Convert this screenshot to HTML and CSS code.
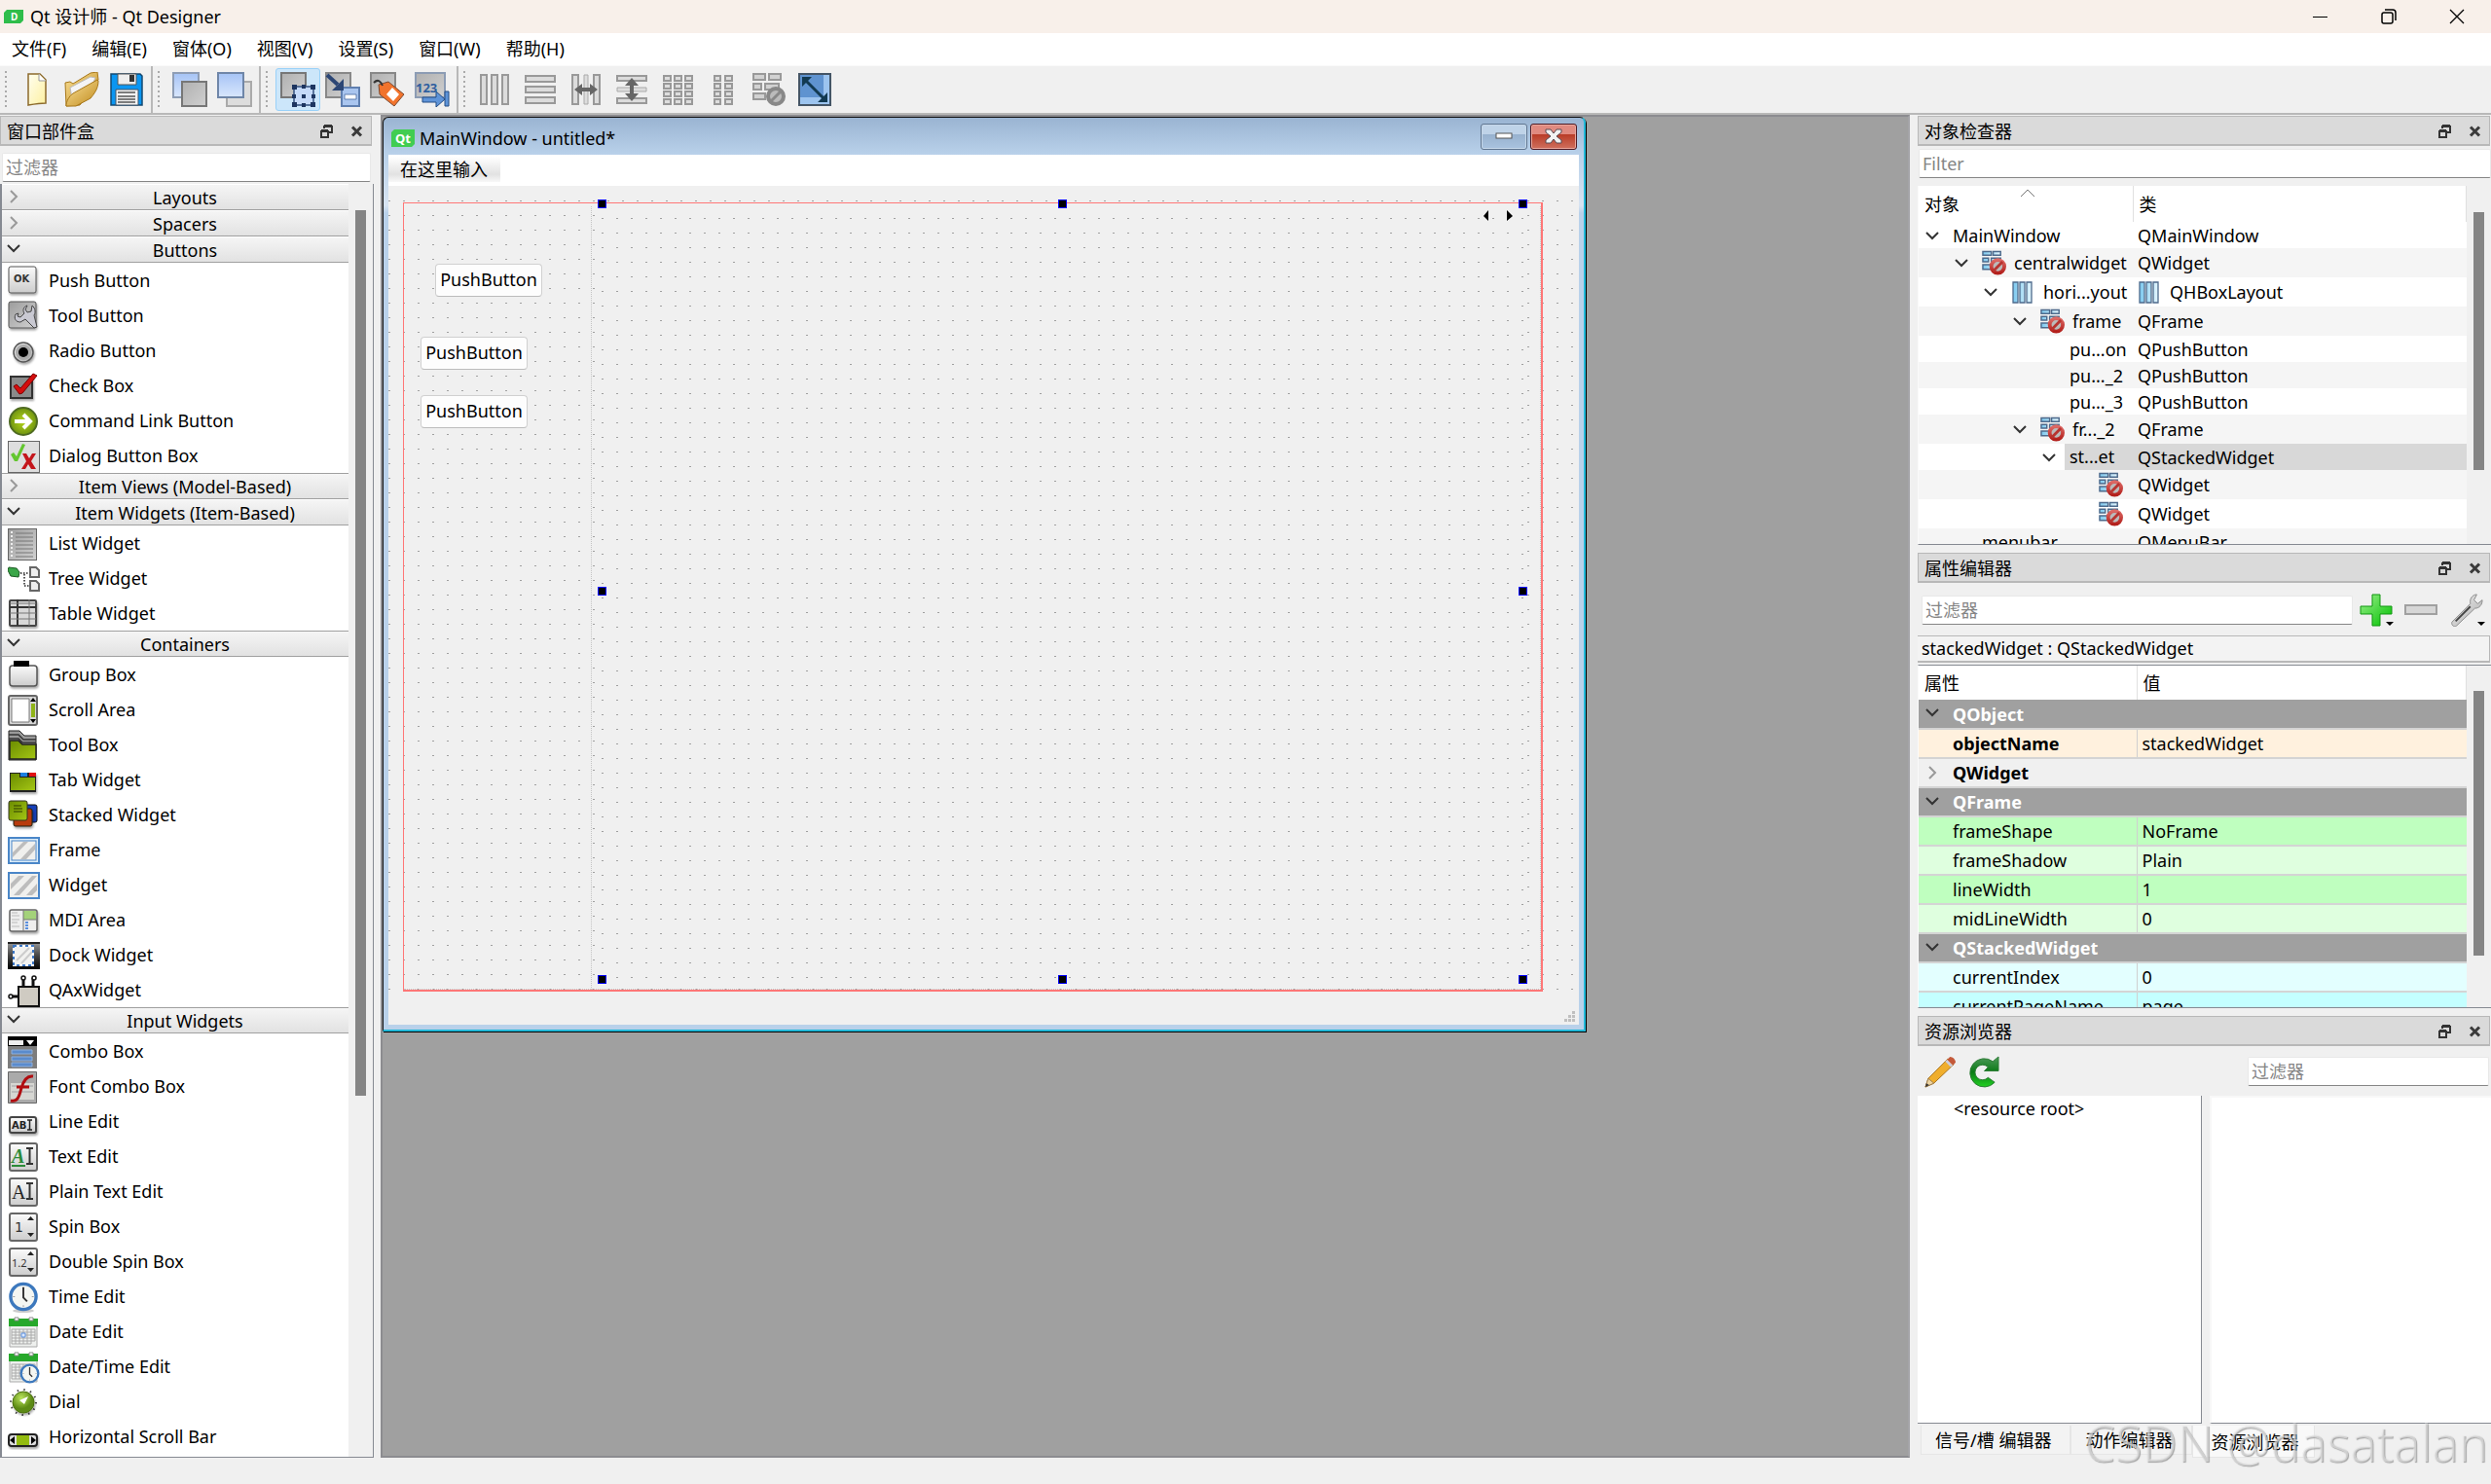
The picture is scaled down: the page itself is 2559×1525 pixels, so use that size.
FILE: index.html
```html
<!DOCTYPE html>
<html lang="zh-CN">
<head>
<meta charset="utf-8">
<title>Qt 设计师 - Qt Designer</title>
<link rel="stylesheet" href="styles.css">
</head>
<body>
<svg class="defs" width="0" height="0" aria-hidden="true">
  <defs>
    <linearGradient id="gGrey" x1="0" y1="0" x2="1" y2="1"><stop offset="0" stop-color="#f4f4f4"/><stop offset="1" stop-color="#a9a9a9"/></linearGradient>
    <linearGradient id="gDark" x1="0" y1="0" x2="1" y2="1"><stop offset="0" stop-color="#9c9c9c"/><stop offset="1" stop-color="#d2d2d2"/></linearGradient>
    <linearGradient id="gMid" x1="0" y1="0" x2="1" y2="1"><stop offset="0" stop-color="#b0b0b0"/><stop offset="1" stop-color="#d0d0d0"/></linearGradient>
    <linearGradient id="gLight" x1="0" y1="0" x2="0" y2="1"><stop offset="0" stop-color="#fbfbfb"/><stop offset="1" stop-color="#cccccc"/></linearGradient>
    <linearGradient id="gGreen" x1="0" y1="0" x2="1" y2="1"><stop offset="0" stop-color="#6b8c00"/><stop offset="1" stop-color="#a4c614"/></linearGradient>
    <linearGradient id="gBlue" x1="0" y1="0" x2="0" y2="1"><stop offset="0" stop-color="#a5c3f5"/><stop offset="1" stop-color="#d9e7fd"/></linearGradient>
    <linearGradient id="gSky" x1="0" y1="0" x2="1" y2="0"><stop offset="0" stop-color="#7cc8ee"/><stop offset="1" stop-color="#e4f6fd"/></linearGradient>
    <linearGradient id="gYellow" x1="0" y1="0" x2="1" y2="1"><stop offset="0" stop-color="#fffef0"/><stop offset="1" stop-color="#fdf0a0"/></linearGradient>
    <linearGradient id="gFolder" x1="0" y1="0" x2="1" y2="1"><stop offset="0" stop-color="#fbe29a"/><stop offset="1" stop-color="#c08a1c"/></linearGradient>
    <linearGradient id="gPlus" x1="0" y1="0" x2="1" y2="1"><stop offset="0" stop-color="#9cf08c"/><stop offset="1" stop-color="#00c000"/></linearGradient>
    <linearGradient id="gReload" x1="0" y1="0" x2="0" y2="1"><stop offset="0" stop-color="#4e9a5a"/><stop offset=".5" stop-color="#0b7a16"/><stop offset="1" stop-color="#22d022"/></linearGradient>
    <linearGradient id="gRed" x1="0" y1="0" x2="0" y2="1"><stop offset="0" stop-color="#dd6a66"/><stop offset="1" stop-color="#b3201c"/></linearGradient>
    <radialGradient id="gBall"><stop offset="0" stop-color="#b8d61c"/><stop offset="1" stop-color="#6f9410"/></radialGradient>
    <radialGradient id="gDial" cx=".4" cy=".3"><stop offset="0" stop-color="#b9e35c"/><stop offset="1" stop-color="#5c8a14"/></radialGradient>
    <linearGradient id="gBlack" x1="0" y1="0" x2="0" y2="1"><stop offset="0" stop-color="#9a9a9a"/><stop offset=".5" stop-color="#444"/><stop offset="1" stop-color="#000"/></linearGradient>
    <filter id="shade" x="-20%" y="-20%" width="150%" height="150%"><feDropShadow dx="1" dy="2" stdDeviation="1" flood-opacity=".35"/></filter>
  </defs>

  <symbol id="down" viewBox="0 0 14 10"><path d="M1 2l6 6 6-6" fill="none" stroke="#333" stroke-width="2"/></symbol>
  <symbol id="right" viewBox="0 0 10 14"><path d="M2 1l6 6-6 6" fill="none" stroke="#999" stroke-width="2"/></symbol>
  <symbol id="float" viewBox="0 0 13 14"><path d="M4 4V2h8v6H9M4 1h8" fill="none" stroke="#333" stroke-width="2"/><path d="M1 7h7v6H1zM1 6h7" fill="none" stroke="#333" stroke-width="2"/></symbol>
  <symbol id="cross" viewBox="0 0 13 13"><path d="M2 2l9 9M11 2l-9 9" stroke="#3a3a3a" stroke-width="3"/></symbol>

  <symbol id="w-push" viewBox="0 0 33 36"><rect x="1" y="4" width="28" height="27" rx="2" fill="url(#gLight)" stroke="#555" filter="url(#shade)"/><text x="6" y="20" font-size="10" font-weight="700" fill="#333" font-family="DejaVu Sans">OK</text></symbol>
  <symbol id="w-tool" viewBox="0 0 33 36"><rect x="1" y="4" width="28" height="27" rx="2" fill="url(#gDark)" stroke="#555" filter="url(#shade)"/><path d="M20 8c-4 1-5 5-3 8l-4 4-3-1 1-3-3 1c-2 4 0 8 5 8l5-3 9 9 3-1-3-12c2-3 1-8-2-10l-1 6-4 1-2-3z" fill="#c9c9d2" stroke="#444"/></symbol>
  <symbol id="w-radio" viewBox="0 0 33 36"><circle cx="16" cy="20" r="10" fill="url(#gGrey)" stroke="#555" stroke-width="1.500" filter="url(#shade)"/><circle cx="16" cy="20" r="8" fill="#aaa"/><circle cx="16" cy="20" r="5" fill="#000"/></symbol>
  <symbol id="w-check" viewBox="0 0 33 36"><rect x="3" y="9" width="22" height="22" fill="#8a8a8a" stroke="#333" stroke-width="2" filter="url(#shade)"/><path d="M6 19l3-2 4 4L26 6l4 2-15 18-3 1z" fill="#d40d0d" stroke="#7e0000"/></symbol>
  <symbol id="w-link" viewBox="0 0 33 36"><circle cx="16" cy="19" r="14" fill="url(#gBall)" stroke="#4f6b22" stroke-width="2"/><path d="M7 19h15M16 12l7 7-7 7" fill="none" stroke="#fff" stroke-width="4"/></symbol>
  <symbol id="w-dialog" viewBox="0 0 33 36"><rect x=".5" y="3.500" width="32" height="32" fill="#dedede" stroke="#666"/><path d="M3 17l3-2 3 4 6-13 3 1-8 17-3 0z" fill="#63c62f"/><path d="M15 16h4l3 5 3-5h4l-5 8 5 8h-5l-3-5-3 5h-4l5-8z" fill="#c4161c"/></symbol>
  <symbol id="w-list" viewBox="0 0 33 36"><rect x=".5" y="3.500" width="29" height="32" fill="url(#gDark)" stroke="#666"/><path d="M8 8h18M8 12h18M8 16h18M8 20h18M8 24h18M8 28h18M8 32h18" stroke="#777"/><path d="M4 6v28" stroke="#eee" stroke-width="2" stroke-dasharray="2 2"/></symbol>
  <symbol id="w-tree" viewBox="0 0 33 36"><path d="M1 7l8 1 3 4-1 5-8-1-3-6z" fill="#3aa648" stroke="#1a5a22"/><path d="M13 13h9M17 14v12h5" fill="none" stroke="#222" stroke-width="1.500" stroke-dasharray="1.500 1.500"/><path d="M23 7h6l3 3v7h-9zM23 21h6l3 3v7h-9z" fill="#eee" stroke="#666" stroke-width="2"/></symbol>
  <symbol id="w-table" viewBox="0 0 33 36"><rect x="2" y="5" width="27" height="26" rx="1" fill="#d8d8d8" stroke="#444" stroke-width="2" filter="url(#shade)"/><path d="M10 4v27M2 12h27" stroke="#333" stroke-width="2"/><path d="M22 4v27M2 18h27M2 24h27M2 8h27" stroke="#777"/></symbol>
  <symbol id="w-group" viewBox="0 0 33 36"><rect x="2" y="9" width="28" height="21" rx="3" fill="url(#gLight)" stroke="#555" stroke-width="1.500" filter="url(#shade)"/><rect x="6" y="4" width="16" height="6" fill="#000"/></symbol>
  <symbol id="w-scroll" viewBox="0 0 33 36"><rect x="1" y="4" width="29" height="30" rx="2" fill="#d6d6d6" stroke="#666" stroke-width="2"/><path d="M4 7h18v24H4z" fill="#fff" stroke="#777"/><path d="M24 12h4v14h-4z" fill="#8fb318"/><path d="M23 10h6l-3-4zM23 28h6l-3 4z"/></symbol>
  <symbol id="w-toolbox" viewBox="0 0 33 36"><path d="M1 4h11l5 5h12v25H1z" fill="#9a9a9a" stroke="#222"/><path d="M1 8h10l5 5h13M1 12h10l4 4h14" fill="none" stroke="#333" stroke-width="1.500"/><path d="M2 14h9l4 4h14v15H2z" fill="url(#gGreen)" stroke="#222" stroke-width="1.500"/></symbol>
  <symbol id="w-tab" viewBox="0 0 33 36"><path d="M2 11h27v20H2z" fill="#222" filter="url(#shade)"/><path d="M3 12h9v4h16v13H3z" fill="url(#gGreen)"/><path d="M13 11h7v4h-7z" fill="#1c7fe0"/><path d="M22 11h7v4h-7z" fill="#e01010"/></symbol>
  <symbol id="w-stack" viewBox="0 0 33 36"><rect x="14" y="8" width="16" height="18" rx="2" fill="#1740b8" stroke="#111"/><rect x="6" y="12" width="19" height="18" rx="2" fill="#b83a0c" stroke="#221" filter="url(#shade)"/><rect x="1" y="4" width="19" height="20" rx="2" fill="url(#gGreen)" stroke="#332"/><path d="M6 9h8M6 12h9M6 15h9" stroke="#2c3a00"/></symbol>
  <symbol id="w-frame" viewBox="0 0 33 36"><rect x="1" y="6" width="31" height="26" fill="#dcecf8" stroke="#4a86c8" stroke-width="2"/><rect x="4" y="9" width="25" height="20" fill="#f0f0ee" stroke="#4a86c8"/><path d="M5 21L16 10h5L5 26zM13 28L28 12v6L19 28z" fill="#bdbdbd"/></symbol>
  <symbol id="w-widget" viewBox="0 0 33 36"><rect x="1" y="6" width="31" height="26" fill="#f0f0ee" stroke="#4a86c8" stroke-width="2"/><path d="M3 17L11 9h6L3 23zM6 29L25 9h5L12 29zM19 29L30 17v7l-5 5z" fill="#bdbdbd"/></symbol>
  <symbol id="w-mdi" viewBox="0 0 33 36"><rect x="2" y="8" width="28" height="22" rx="2" fill="#eee" stroke="#666" stroke-width="1.500" filter="url(#shade)"/><path d="M16 9h13v9H16z" fill="#a4d27a"/><path d="M16 8v22M16 18h14" stroke="#777"/><path d="M4 11h6M4 14h8M4 18h8M4 21h6M4 25h8" stroke="#bbb"/><path d="M18 21h3M18 24h3M18 27h3" stroke="#5a8fdd" stroke-width="2"/></symbol>
  <symbol id="w-dock" viewBox="0 0 33 36"><path d="M0 5h33v28H0z" fill="url(#gBlack)"/><path d="M0 6h33" stroke="#222" stroke-width="2"/><rect x="6" y="9" width="20" height="20" fill="#f2f2f0" stroke="#fff" stroke-width="2"/><path d="M9 24L22 11M14 27L25 15" stroke="#ccc" stroke-width="2"/><rect x="6" y="9" width="20" height="20" fill="none" stroke="#3b76c4" stroke-width="2" stroke-dasharray="3 3"/></symbol>
  <symbol id="w-qax" viewBox="0 0 33 36"><path d="M16 6v9M26 6v9M2 25h9" stroke="#111" stroke-width="3"/><rect x="11" y="15" width="21" height="20" fill="#cfcbc2" stroke="#111" stroke-width="2"/><circle cx="16" cy="6" r="2" fill="#fff" stroke="#111" stroke-width="1.500"/><circle cx="27" cy="6" r="2" fill="#fff" stroke="#111" stroke-width="1.500"/><circle cx="3" cy="25" r="2" fill="#fff" stroke="#111" stroke-width="1.500"/></symbol>
  <symbol id="w-combo" viewBox="0 0 33 36"><path d="M0 3h30v33H0z" fill="#7d7d7d"/><path d="M0 3h30v10H0z"/><path d="M1 7h15v5H1z" fill="#eee"/><path d="M19 7h8l-4 5z" fill="#fff"/><path d="M4 17h21v4H4zM4 24h21v4H4zM4 30h21v4H4z" fill="#5a8bcd" stroke="#8fb0dc"/></symbol>
  <symbol id="w-font" viewBox="0 0 33 36"><path d="M.5 3.500h29v32H.5z" fill="#aaa" stroke="#666"/><path d="M3 15h24v17H3z" fill="#d6d6d2"/><path d="M4 18h22M4 24h22" stroke="#bbb" stroke-width="2"/><path d="M3 33c8 2 9-6 11-13s5-13 12-12M9 19h13" fill="none" stroke="#b00d10" stroke-width="3"/></symbol>
  <symbol id="w-line" viewBox="0 0 33 36"><rect x="2" y="14" width="27" height="16" rx="2" fill="url(#gLight)" stroke="#444" stroke-width="2" filter="url(#shade)"/><text x="4" y="26" font-size="10" font-weight="700" font-family="DejaVu Sans" fill="#222">AB</text><path d="M20 17h5M20 27h5M22.500 17v10" stroke="#222" stroke-width="1.500"/></symbol>
  <symbol id="w-text" viewBox="0 0 33 36"><rect x="2" y="5" width="28" height="28" rx="2" fill="url(#gLight)" stroke="#666" stroke-width="2"/><text x="4" y="25" font-size="20" font-style="italic" font-weight="700" font-family="Liberation Serif" fill="#2b8a38">A</text><path d="M4 28h14" stroke="#2b8a38" stroke-width="2"/><path d="M19 10h7M19 26h7M22.500 10v16" stroke="#333" stroke-width="2"/></symbol>
  <symbol id="w-plain" viewBox="0 0 33 36"><rect x="2" y="5" width="28" height="28" rx="2" fill="url(#gLight)" stroke="#666" stroke-width="2"/><text x="4" y="26" font-size="20" font-family="Liberation Serif" fill="#222">A</text><path d="M19 10h7M19 26h7M22.500 10v16" stroke="#333" stroke-width="2"/></symbol>
  <symbol id="w-spin" viewBox="0 0 33 36"><rect x="2" y="5" width="28" height="28" rx="2" fill="url(#gLight)" stroke="#666" stroke-width="2"/><text x="7" y="24" font-size="14" font-family="DejaVu Sans" fill="#333">1</text><path d="M20 12h7l-3.500-4zM20 25h7l-3.500 4z" fill="#222"/></symbol>
  <symbol id="w-double" viewBox="0 0 33 36"><rect x="2" y="5" width="28" height="28" rx="2" fill="url(#gLight)" stroke="#666" stroke-width="2"/><text x="4" y="24" font-size="11" font-family="Noto Sans" fill="#333">1.2</text><path d="M20 12h7l-3.500-4zM20 25h7l-3.500 4z" fill="#222"/></symbol>
  <symbol id="clock" viewBox="0 0 32 32"><circle cx="16" cy="16" r="13.500" fill="#f4f6f2" stroke="#3c78bd" stroke-width="3.500"/><path d="M16 6v11l4 4" fill="none" stroke="#333" stroke-width="2"/><path d="M16 25v2M5 16h2M25 16h2" stroke="#999"/></symbol>
  <symbol id="w-time" viewBox="0 0 33 36"><ellipse cx="16" cy="33" rx="11" ry="2" fill="#ccc"/><use href="#clock" x="0" y="3" width="32" height="31"/></symbol>
  <symbol id="w-date" viewBox="0 0 33 36"><path d="M2 8h28v26H2z" fill="#eef0ee" stroke="#aaa"/><path d="M1 5h30v8H1z" fill="#27a82b"/><path d="M4 16h24M4 19h24M4 22h24M4 25h24M4 28h24M4 31h20M4 16v15M8 16v15M12 16v15M16 16v15M20 16v15M24 16v15M28 16v12" stroke="#aaa"/><path d="M14 20h4v4h-4z" fill="#dbe9ff" stroke="#5a8fdd"/><path d="M7 4h4v3H7zM22 4h4v3h-4z" fill="#fff" stroke="#888"/></symbol>
  <symbol id="w-datetime" viewBox="0 0 33 36"><use href="#w-date" width="33" height="36"/><use href="#clock" x="12" y="15" width="21" height="21"/></symbol>
  <symbol id="w-dial" viewBox="0 0 33 36"><circle cx="16" cy="19" r="13" fill="none" stroke="#444" stroke-width="2" stroke-dasharray="1.500 5.300"/><circle cx="16" cy="19" r="11" fill="url(#gDial)" stroke="#4b7010" filter="url(#shade)"/><path d="M12 17l9-4-4 8z" fill="#fff"/></symbol>
  <symbol id="w-hscroll" viewBox="0 0 33 36"><rect x="1" y="16" width="29" height="12" rx="3" fill="#ddd" stroke="#222" stroke-width="2" filter="url(#shade)"/><path d="M9 17h13v10H9z" fill="#93bb10"/><path d="M7 18v8l-5-4zM24 18v8l5-4z"/></symbol>

  <symbol id="t-new" viewBox="0 0 36 36"><path d="M9 2h12l6 6v24c-6 0-12 1-18 2z" fill="url(#gYellow)" stroke="#8c6a2c" stroke-width="1.500"/><path d="M20 2v7h7" fill="#fff" stroke="#999"/></symbol>
  <symbol id="t-open" viewBox="0 0 36 36"><path d="M1 11l5-1 3 2L27 1l7-1 1 8L16 34l-14 1z" fill="url(#gFolder)" stroke="#a8781a"/><path d="M6 16L27 5l5 1-6 13-18 8z" fill="#f4f4f6" stroke="#bbb"/><path d="M9 22l25-14 1 1c0 8-4 13-8 18L12 35H2c0-5 3-10 7-13z" fill="url(#gFolder)" stroke="#a8781a"/></symbol>
  <symbol id="t-save" viewBox="0 0 36 36"><path d="M2 2h30l2 2v30H2z" fill="#0b96f2" stroke="#154a72" stroke-width="1.500"/><path d="M9 2h19v11H9z" fill="#eee" stroke="#555"/><path d="M21 3h5v7h-5z" fill="#333"/><path d="M7 18h23v16H7z" fill="#f2f2f2" stroke="#456"/><path d="M9 21h18M9 25h18M9 28h18M9 31h18" stroke="#555" stroke-width="1.500"/></symbol>
  <symbol id="t-back" viewBox="0 0 36 36"><path d="M1 1h26v25H1z" fill="url(#gBlue)" stroke="#8e9db5" stroke-width="2"/><path d="M10 10h25v25H10z" fill="url(#gMid)" stroke="#777" stroke-width="2"/></symbol>
  <symbol id="t-front" viewBox="0 0 36 36"><path d="M10 10h25v25H10z" fill="#ddd" stroke="#aaa" stroke-width="2"/><path d="M1 1h26v25H1z" fill="url(#gBlue)" stroke="#6f86a8" stroke-width="2"/></symbol>
  <symbol id="t-widgets" viewBox="0 0 36 36"><path d="M1 1h25v25H1z" fill="url(#gMid)" stroke="#777" stroke-width="2"/><path d="M14 15h20v19H14z" fill="#c5daf9" stroke="#33507e" stroke-width="1.500"/><path d="M12 13h5v5h-5zM22 13h4v4h-4zM31 13h5v5h-5zM12 23h4v4h-4zM32 23h4v4h-4zM12 31h5v5h-5zM22 32h4v4h-4zM31 31h5v5h-5zM22 23h4v4h-4z" fill="#1d3560"/></symbol>
  <symbol id="t-signals" viewBox="0 0 36 36"><path d="M1 1h25v25H1z" fill="url(#gMid)" stroke="#888" stroke-width="2"/><path d="M17 16h18v19H17z" fill="#a9c5ef" stroke="#5f7fb0" stroke-width="2"/><path d="M20 23h12v5H20z" fill="#fff" stroke="#5f7fb0"/><path d="M2 3l11 10" stroke="#2c4675" stroke-width="4"/><path d="M19 7v12H7z" fill="#2c4675"/></symbol>
  <symbol id="t-buddies" viewBox="0 0 36 36"><path d="M1 1h25v25H1z" fill="url(#gMid)" stroke="#888" stroke-width="2"/><path d="M9 13l10-3 16 13-10 12L10 23z" fill="#f1732c" stroke="#7b4a32"/><path d="M23 16l7 7-6 7-7-7z" fill="#fff"/><path d="M4 11c4-4 7-2 9 3" fill="none" stroke="#333" stroke-width="2"/></symbol>
  <symbol id="t-taborder" viewBox="0 0 36 36"><path d="M1 1h30v25H1z" fill="url(#gMid)" stroke="#8c9cb4" stroke-width="2"/><text x="1" y="21" font-size="13" font-weight="700" font-family="Noto Sans" fill="#2f5f9f">123</text><path d="M8 26h14v-6l9 8-9 8v-5H8zM31 20h4v15h-4z" fill="#5f94d8" stroke="#234c85"/></symbol>
  <symbol id="t-h" viewBox="0 0 36 36"><path d="M4 3h6v30H4zM15 3h6v30h-6zM26 3h6v30h-6z" fill="#dcdcdc" stroke="#999" stroke-width="2"/></symbol>
  <symbol id="t-v" viewBox="0 0 36 36"><path d="M3 4h30v6H3zM3 15h30v6H3zM3 26h30v6H3z" fill="#dcdcdc" stroke="#999" stroke-width="2"/></symbol>
  <symbol id="t-hs" viewBox="0 0 36 36"><path d="M4 3h6v30H4zM26 3h6v30h-6z" fill="#dcdcdc" stroke="#999" stroke-width="2"/><path d="M16 3h4v30h-4z" fill="#ddd" stroke="#aaa"/><path d="M6 18l8-6v4h8v-4l8 6-8 6v-4h-8v4z" fill="#666"/></symbol>
  <symbol id="t-vs" viewBox="0 0 36 36"><path d="M3 4h30v5H3zM3 27h30v5H3z" fill="#dcdcdc" stroke="#999" stroke-width="2"/><path d="M3 16h30v4H3z" fill="#ddd" stroke="#aaa"/><path d="M18 6l7 8h-5v8h5l-7 8-7-8h5v-8h-5z" fill="#666"/></symbol>
  <symbol id="t-grid" viewBox="0 0 36 36"><path d="M4 4h7v5H4zM15 4h7v5h-7zM26 4h7v5h-7zM4 12h7v5H4zM15 12h7v5h-7zM26 12h7v5h-7zM4 20h7v5H4zM15 20h7v5h-7zM26 20h7v5h-7zM4 28h7v5H4zM15 28h7v5h-7zM26 28h7v5h-7z" fill="#ddd" stroke="#999" stroke-width="2"/></symbol>
  <symbol id="t-form" viewBox="0 0 36 36"><path d="M9 4h6v5H9zM20 4h7v5h-7zM9 12h6v5H9zM20 12h7v5h-7zM9 20h6v5H9zM20 20h7v5h-7zM9 28h6v5H9zM20 28h7v5h-7z" fill="#ddd" stroke="#999" stroke-width="2"/></symbol>
  <symbol id="t-break" viewBox="0 0 36 36"><path d="M2 2h12v6H2zM18 2h12v6H18zM2 12h8v6H2zM14 12h14v6H14zM2 22h12v6H2z" fill="#d2d2d2" stroke="#999" stroke-width="2"/><circle cx="25" cy="25" r="8" fill="#bbb" stroke="#888" stroke-width="4"/><path d="M20 30l10-10" stroke="#888" stroke-width="3"/></symbol>
  <symbol id="t-adjust" viewBox="0 0 36 36"><path d="M2 2h32v32H2z" fill="#5f93d0" stroke="#456" stroke-width="2"/><path d="M3 26h24V3h6v30H3z" fill="#9cc4ef"/><path d="M8 8l21 21" stroke="#123a52" stroke-width="3"/><path d="M5 5h10L5 15zM31 31H21l10-10z" fill="#123a52"/></symbol>

  <symbol id="nolayout" viewBox="0 0 26 26"><path d="M1 1h9v4H1zM12 1h8v4h-8zM1 8h6v4H1zM10 8h10v4H10zM1 15h9v5H1z" fill="url(#gSky)" stroke="#4d6a8c" stroke-width="1.500"/><circle cx="17" cy="17" r="7" fill="#bbb" stroke="url(#gRed)" stroke-width="4"/><path d="M12 22l10-10" stroke="#b83430" stroke-width="3"/></symbol>
  <symbol id="hbox" viewBox="0 0 25 26"><path d="M2 3h5v21H2zM9 3h5v21H9zM16 3h5v21h-5z" fill="url(#gSky)" stroke="#4d6a8c" stroke-width="1.300"/></symbol>
  <symbol id="plus" viewBox="0 0 34 34"><path d="M13 1h8v12h12v8H21v12h-8V21H1v-8h12z" fill="url(#gPlus)" stroke="#119611"/></symbol>
  <symbol id="minus" viewBox="0 0 34 34"><path d="M1 12h32v9H1z" fill="#d6d6d6" stroke="#a0a0a0" stroke-width="2"/></symbol>
  <symbol id="wrench" viewBox="0 0 36 36"><path d="M2 31L22 11c-1-5 2-10 7-10l-3 6 4 4 5-4c0 5-3 9-8 9L7 35c-3 2-6-1-5-4z" fill="url(#gGrey)" stroke="#888"/><path d="M6 30l16-16" stroke="#444" stroke-width="2"/></symbol>
  <symbol id="pencil" viewBox="0 0 34 34"><path d="M1 33l3-9L25 3l6 6L10 29z" fill="#f0ae2c" stroke="#a87420"/><path d="M1 33l3-9 6 5z" fill="#ecd3a0" stroke="#a08050"/><path d="M1 33l1-4 3 2z" fill="#333"/><path d="M24 4l3-3c3 0 6 3 6 6l-3 3z" fill="#c4593a"/><path d="M22 6l6 6 2-2-6-6z" fill="#ccd"/></symbol>
  <symbol id="reload" viewBox="0 0 34 34"><path d="M22 12a8 8 0 1 0 0 11l7 5A15 15 0 1 1 27 6l6-5v15H18z" fill="url(#gReload)" stroke="#2b7a34"/></symbol>
</svg>

<div class="app">
  <header class="titlebar">
    <svg class="logo" viewBox="0 0 20 14"><path d="M3 0h17v11l-3 3H0V3z" fill="#2fbd4b"/><text x="7" y="11" font-size="10" font-weight="700" font-family="Noto Sans" fill="#fff">D</text></svg>
    <h1>Qt 设计师 - Qt Designer</h1>
    <div class="caption-buttons">
      <button aria-label="最小化"><svg width="16" height="16"><path d="M0 8.500h15" stroke="#000"/></svg></button>
      <button aria-label="还原"><svg width="16" height="16" fill="none" stroke="#000" stroke-width="1.500"><rect x="1" y="4" width="11" height="11" rx="2"/><path d="M4 1h8a3 3 0 0 1 3 3v8"/></svg></button>
      <button aria-label="关闭"><svg width="16" height="16"><path d="M1 1l14 14M15 1L1 15" stroke="#000" stroke-width="1.300"/></svg></button>
    </div>
  </header>

  <nav class="menubar">
    <button>文件(F)</button><button>编辑(E)</button><button>窗体(O)</button><button>视图(V)</button><button>设置(S)</button><button>窗口(W)</button><button>帮助(H)</button>
  </nav>

  <div class="toolbars">
    <div class="toolbar">
      <button aria-label="新建"><svg><use href="#t-new"/></svg></button>
      <button aria-label="打开"><svg><use href="#t-open"/></svg></button>
      <button aria-label="保存"><svg><use href="#t-save"/></svg></button>
    </div>
    <div class="toolbar">
      <button aria-label="放到后面"><svg><use href="#t-back"/></svg></button>
      <button aria-label="放到前面"><svg><use href="#t-front"/></svg></button>
    </div>
    <div class="toolbar">
      <button class="on" aria-label="编辑控件"><svg><use href="#t-widgets"/></svg></button>
      <button aria-label="编辑信号/槽"><svg><use href="#t-signals"/></svg></button>
      <button aria-label="编辑伙伴"><svg><use href="#t-buddies"/></svg></button>
      <button aria-label="编辑 Tab 顺序"><svg><use href="#t-taborder"/></svg></button>
    </div>
    <div class="toolbar last">
      <button aria-label="水平布局"><svg><use href="#t-h"/></svg></button>
      <button aria-label="垂直布局"><svg><use href="#t-v"/></svg></button>
      <button aria-label="水平分裂器"><svg><use href="#t-hs"/></svg></button>
      <button aria-label="垂直分裂器"><svg><use href="#t-vs"/></svg></button>
      <button aria-label="栅格布局"><svg><use href="#t-grid"/></svg></button>
      <button aria-label="表单布局"><svg><use href="#t-form"/></svg></button>
      <button aria-label="打破布局"><svg><use href="#t-break"/></svg></button>
      <button aria-label="调整大小"><svg><use href="#t-adjust"/></svg></button>
    </div>
  </div>

  <main class="workspace">
    <section class="dock box">
      <div class="dock-title"><h2>窗口部件盒</h2><button aria-label="浮动"><svg><use href="#float"/></svg></button><button aria-label="关闭"><svg><use href="#cross"/></svg></button></div>
      <input class="filter" type="text" placeholder="过滤器" aria-label="过滤器">
      <div class="widget-list">
        <div class="widgets">
          <button class="cat"><svg class="closed"><use href="#right"/></svg>Layouts</button>
          <button class="cat"><svg class="closed"><use href="#right"/></svg>Spacers</button>
          <button class="cat"><svg><use href="#down"/></svg>Buttons</button>
          <ul>
            <li><svg><use href="#w-push"/></svg>Push Button</li>
            <li><svg><use href="#w-tool"/></svg>Tool Button</li>
            <li><svg><use href="#w-radio"/></svg>Radio Button</li>
            <li><svg><use href="#w-check"/></svg>Check Box</li>
            <li><svg><use href="#w-link"/></svg>Command Link Button</li>
            <li><svg><use href="#w-dialog"/></svg>Dialog Button Box</li>
          </ul>
          <button class="cat after"><svg class="closed"><use href="#right"/></svg>Item Views (Model-Based)</button>
          <button class="cat"><svg><use href="#down"/></svg>Item Widgets (Item-Based)</button>
          <ul>
            <li><svg><use href="#w-list"/></svg>List Widget</li>
            <li><svg><use href="#w-tree"/></svg>Tree Widget</li>
            <li><svg><use href="#w-table"/></svg>Table Widget</li>
          </ul>
          <button class="cat after"><svg><use href="#down"/></svg>Containers</button>
          <ul>
            <li><svg><use href="#w-group"/></svg>Group Box</li>
            <li><svg><use href="#w-scroll"/></svg>Scroll Area</li>
            <li><svg><use href="#w-toolbox"/></svg>Tool Box</li>
            <li><svg><use href="#w-tab"/></svg>Tab Widget</li>
            <li><svg><use href="#w-stack"/></svg>Stacked Widget</li>
            <li><svg><use href="#w-frame"/></svg>Frame</li>
            <li><svg><use href="#w-widget"/></svg>Widget</li>
            <li><svg><use href="#w-mdi"/></svg>MDI Area</li>
            <li><svg><use href="#w-dock"/></svg>Dock Widget</li>
            <li><svg><use href="#w-qax"/></svg>QAxWidget</li>
          </ul>
          <button class="cat after"><svg><use href="#down"/></svg>Input Widgets</button>
          <ul>
            <li><svg><use href="#w-combo"/></svg>Combo Box</li>
            <li><svg><use href="#w-font"/></svg>Font Combo Box</li>
            <li><svg><use href="#w-line"/></svg>Line Edit</li>
            <li><svg><use href="#w-text"/></svg>Text Edit</li>
            <li><svg><use href="#w-plain"/></svg>Plain Text Edit</li>
            <li><svg><use href="#w-spin"/></svg>Spin Box</li>
            <li><svg><use href="#w-double"/></svg>Double Spin Box</li>
            <li><svg><use href="#w-time"/></svg>Time Edit</li>
            <li><svg><use href="#w-date"/></svg>Date Edit</li>
            <li><svg><use href="#w-datetime"/></svg>Date/Time Edit</li>
            <li><svg><use href="#w-dial"/></svg>Dial</li>
            <li><svg><use href="#w-hscroll"/></svg>Horizontal Scroll Bar</li>
          </ul>
        </div>
        <div class="scrollbar"><span class="thumb t-box"></span></div>
      </div>
    </section>

    <section class="mdi">
      <article class="window">
        <header class="win-title">
          <svg class="qt" viewBox="0 0 24 18"><path d="M3 0h21v15l-3 3H0V3z" fill="#41cd52"/><text x="4" y="14" font-size="13" font-weight="700" font-family="Noto Sans" fill="#fff">Qt</text></svg>
          <h2>MainWindow - untitled*</h2>
          <button class="win-min" aria-label="最小化"><svg width="18" height="8"><rect x="1" y="1" width="16" height="5" fill="#fff" stroke="#555"/></svg></button>
          <button class="win-close" aria-label="关闭"><svg width="20" height="18"><path d="M2 2h5l3 4 3-4h5v3l-5 4 5 4v3h-5l-3-4-3 4H2v-3l5-4-5-4z" fill="#f2f2f2" stroke="#5a4a52"/></svg></button>
        </header>
        <div class="form">
          <div class="form-menu"><button>在这里输入</button></div>
          <div class="canvas">
            <div class="central"></div>
            <div class="frame-left"></div>
            <div class="frame-right"></div>
            <button class="pb pb1">PushButton</button>
            <button class="pb pb2">PushButton</button>
            <button class="pb pb3">PushButton</button>
            <div class="stacked">
              <div class="page"></div>
              <button class="page-prev" aria-label="上一页"><svg width="6" height="12"><path d="M5 0v11L0 6z"/></svg></button>
              <button class="page-next" aria-label="下一页"><svg width="6" height="12"><path d="M0 0v11l6-5z"/></svg></button>
              <i class="h nw"></i><i class="h n"></i><i class="h ne"></i><i class="h w"></i><i class="h e"></i><i class="h sw"></i><i class="h s"></i><i class="h se"></i>
            </div>
          </div>
          <div class="form-status"><svg width="12" height="12" fill="#bfbfbf"><path d="M8 0h3v3H8zM4 4h3v3H4zM8 4h3v3H8zM0 8h3v3H0zM4 8h3v3H4zM8 8h3v3H8z"/></svg></div>
        </div>
      </article>
    </section>

    <div class="side">
      <section class="dock inspector">
        <div class="dock-title"><h2>对象检查器</h2><button aria-label="浮动"><svg><use href="#float"/></svg></button><button aria-label="关闭"><svg><use href="#cross"/></svg></button></div>
        <input class="filter" type="text" placeholder="Filter" aria-label="Filter">
        <div class="tree">
          <table class="objects">
            <colgroup><col class="c-name"><col></colgroup>
            <thead><tr><th class="sorted">对象<svg width="16" height="8"><path d="M1 8l7-7 7 7" fill="none" stroke="#777"/></svg></th><th>类</th></tr></thead>
            <tbody>
              <tr><td><div class="n l0"><svg class="chev"><use href="#down"/></svg>MainWindow</div></td><td>QMainWindow</td></tr>
              <tr class="tall"><td><div class="n l1"><svg class="chev"><use href="#down"/></svg><svg class="ico"><use href="#nolayout"/></svg>centralwidget</div></td><td>QWidget</td></tr>
              <tr class="tall"><td><div class="n l2"><svg class="chev"><use href="#down"/></svg><svg class="ico"><use href="#hbox"/></svg>hori...yout</div></td><td><div class="n"><svg class="ico"><use href="#hbox"/></svg>QHBoxLayout</div></td></tr>
              <tr class="tall"><td><div class="n l3"><svg class="chev"><use href="#down"/></svg><svg class="ico"><use href="#nolayout"/></svg>frame</div></td><td>QFrame</td></tr>
              <tr><td><div class="n l4 leaf">pu...on</div></td><td>QPushButton</td></tr>
              <tr><td><div class="n l4 leaf">pu..._2</div></td><td>QPushButton</td></tr>
              <tr><td><div class="n l4 leaf">pu..._3</div></td><td>QPushButton</td></tr>
              <tr class="tall"><td><div class="n l3"><svg class="chev"><use href="#down"/></svg><svg class="ico"><use href="#nolayout"/></svg>fr..._2</div></td><td>QFrame</td></tr>
              <tr class="selected"><td><div class="n l4"><svg class="chev"><use href="#down"/></svg><span>st...et</span></div></td><td>QStackedWidget</td></tr>
              <tr class="tall"><td><div class="n l5 leaf"><svg class="ico"><use href="#nolayout"/></svg></div></td><td>QWidget</td></tr>
              <tr class="tall"><td><div class="n l5 leaf"><svg class="ico"><use href="#nolayout"/></svg></div></td><td>QWidget</td></tr>
              <tr><td><div class="n l1 leaf">menubar</div></td><td>QMenuBar</td></tr>
            </tbody>
          </table>
          <div class="scrollbar"><span class="thumb t-objects"></span></div>
        </div>
      </section>

      <section class="dock properties">
        <div class="dock-title"><h2>属性编辑器</h2><button aria-label="浮动"><svg><use href="#float"/></svg></button><button aria-label="关闭"><svg><use href="#cross"/></svg></button></div>
        <div class="prop-tools">
          <input class="filter" type="text" placeholder="过滤器" aria-label="过滤器">
          <button class="drop" aria-label="添加动态属性"><svg><use href="#plus"/></svg></button>
          <button aria-label="删除动态属性"><svg><use href="#minus"/></svg></button>
          <button class="drop" aria-label="配置属性编辑器"><svg><use href="#wrench"/></svg></button>
        </div>
        <p class="target">stackedWidget : QStackedWidget</p>
        <div class="tree lined">
          <table class="props">
            <colgroup><col class="c-prop"><col></colgroup>
            <thead><tr><th>属性</th><th>值</th></tr></thead>
            <tbody>
              <tr class="group"><th colspan="2"><svg><use href="#down"/></svg>QObject</th></tr>
              <tr class="peach"><td><b>objectName</b></td><td>stackedWidget</td></tr>
              <tr class="folded"><th colspan="2"><svg class="closed"><use href="#right"/></svg>QWidget</th></tr>
              <tr class="group"><th colspan="2"><svg><use href="#down"/></svg>QFrame</th></tr>
              <tr class="green"><td>frameShape</td><td>NoFrame</td></tr>
              <tr class="mint"><td>frameShadow</td><td>Plain</td></tr>
              <tr class="green"><td>lineWidth</td><td>1</td></tr>
              <tr class="mint"><td>midLineWidth</td><td>0</td></tr>
              <tr class="group"><th colspan="2"><svg><use href="#down"/></svg>QStackedWidget</th></tr>
              <tr class="ice"><td>currentIndex</td><td>0</td></tr>
              <tr class="cyan"><td>currentPageName</td><td>page</td></tr>
            </tbody>
          </table>
          <div class="scrollbar"><span class="thumb t-props"></span></div>
        </div>
      </section>

      <section class="dock resources">
        <div class="dock-title"><h2>资源浏览器</h2><button aria-label="浮动"><svg><use href="#float"/></svg></button><button aria-label="关闭"><svg><use href="#cross"/></svg></button></div>
        <div class="res-tools">
          <button aria-label="编辑资源"><svg><use href="#pencil"/></svg></button>
          <button aria-label="重新载入"><svg><use href="#reload"/></svg></button>
          <input class="filter" type="text" placeholder="过滤器" aria-label="过滤器">
        </div>
        <div class="res-panes">
          <div class="pane root">&lt;resource root&gt;</div>
          <div class="pane files"></div>
        </div>
        <div class="tabs">
          <button>信号/槽 编辑器</button><button>动作编辑器</button><button class="active">资源浏览器</button>
        </div>
        <span class="watermark">CSDN @dasatalan</span>
      </section>
    </div>
  </main>
  <footer class="statusbar"></footer>
</div>
</body>
</html>
```
FILE: styles.css
```css
* { box-sizing: border-box; }

body {
  margin: 0;
  background: #f0f0f0;
  color: #000;
  font: 18px/24px "Noto Sans", "Noto Sans CJK SC", sans-serif;
}

button {
  padding: 0;
  border: 0;
  background: none;
  color: inherit;
  font: inherit;
}

h1, h2, p, ul { margin: 0; padding: 0; font-size: 18px; font-weight: 400; }
ul { list-style: none; }
svg { display: block; flex: none; }
.defs { position: absolute; }

.app { display: flex; flex-direction: column; height: 100vh; overflow: hidden; }

/* title bar and menus */
.titlebar { display: flex; align-items: center; flex: none; height: 34px; padding-left: 4px; background: #f8f0ea; }
.titlebar h1 { flex: 1; margin-left: 7px; }
.logo { width: 20px; height: 14px; }
.caption-buttons { display: flex; }
.caption-buttons button { display: grid; place-items: center; width: 70px; height: 34px; }

.menubar { display: flex; flex: none; height: 33px; padding-bottom: 1px; background: #fff; }
.menubar button { padding: 0 14px 0 12px; }

/* tool bars */
.toolbars { display: flex; flex: none; height: 51px; border-top: 1px solid #fafafa; border-bottom: 2px solid #b8b8b8; }
.toolbar { display: flex; align-items: center; padding: 0 2px 0 15px; border-right: 2px solid #b8b8b8; background: repeating-linear-gradient(#aaa 0 2px, transparent 2px 5px) 5px 5px / 2px 38px no-repeat; }
.toolbar.last { flex: 1; gap: 1px; padding-left: 14px; border-right: 0; }
.toolbar button { display: grid; place-items: center; width: 46px; height: 44px; border: 1px solid transparent; }
.toolbar svg { width: 36px; height: 36px; }
.toolbar .on { border-color: #99d1f8; border-radius: 3px; background: #cce6fa; }

/* docks */
.workspace { display: grid; grid-template-columns: 384px minmax(0, 1fr) 589px; flex: 1; min-height: 0; }
.dock { display: flex; flex-direction: column; min-height: 0; }
.dock-title { display: flex; align-items: center; flex: none; height: 31px; margin-right: 1px; padding: 2px 8px 0 6px; border: 1px solid #b8b8b8; border-bottom-width: 2px; background: #dadada; }
.dock-title h2 { flex: 1; }
.dock-title button { margin-left: 18px; }
.dock-title svg { width: 13px; height: 14px; }

.filter { flex: none; height: 30px; margin: 0; padding: 0 3px; border: 1px solid #e8e8e8; border-bottom: 1px solid #868686; border-radius: 2px; outline: 0; background: #fff; font: 18px/24px "Noto Sans", "Noto Sans CJK SC", sans-serif; }
.filter::placeholder { color: #858585; opacity: 1; }

.scrollbar { flex: none; width: 25px; background: #f0f0f0; }
.thumb { display: block; width: 11px; margin-left: 7px; background: #858585; }

/* widget box */
.box { padding-top: 1px; }
.box .filter { margin: 7px 3px 2px 2px; }
.box .dock-title { margin-right: 2px; }
.widget-list { display: flex; flex: 1; min-height: 0; overflow: hidden; border: 1px solid #868a92; border-top: 0; border-left-width: 2px; background: #fff; }
.widgets { flex: 1; }
.t-box { height: 910px; margin-top: 27px; }
.cat { position: relative; display: block; width: 100%; height: 27px; padding: 0 0 0 20px; border-top: 1px solid #fff; border-bottom: 1px solid #a0a0a0; background: linear-gradient(#f5f5f5, #e2e2e2); }
.cat.after { border-top-color: #a0a0a0; }
.cat svg { position: absolute; left: 5px; top: 6px; width: 14px; height: 10px; }
.cat .closed { top: 5px; width: 14px; height: 14px; }
.widgets li { display: flex; align-items: center; gap: 9px; height: 36px; padding-left: 6px; }
.widgets li svg { width: 33px; height: 36px; }

/* form being edited */
.mdi { position: relative; margin: 0 8px 0 7px; border: 2px solid #8c8c90; border-right-color: #a4a4a8; background: #a0a0a0; overflow: hidden; }
.window { position: absolute; left: 0; top: 0; display: flex; flex-direction: column; width: 1236px; height: 940px; padding: 0 5px 5px; border: 1px solid #111; border-right: 2px solid #22b8d8; border-bottom: 2px solid #22b8d8; border-radius: 6px 6px 0 0; background: linear-gradient(#9ab4d2, #b9d1ea 38px, #d8e4f2 90px, #b9d1ea 98px); box-shadow: 1px 1px 0 #000; }
.win-title { display: flex; align-items: center; flex: none; height: 38px; padding: 4px 0 0 3px; }
.win-title h2 { flex: 1; margin-left: 5px; }
.qt { width: 24px; height: 18px; }
.win-title button { display: grid; place-items: center; width: 48px; height: 27px; margin: -4px 0 0 3px; border: 1px solid #5f7590; border-radius: 3px; }
.win-min { background: linear-gradient(#bfd3e8 42%, #98b2cf 42%, #a9c3df); box-shadow: inset 0 0 0 1px #c6d8ea; }
.win-title .win-close { margin-right: 2px; border-color: #4e1a24; background: linear-gradient(#e08a80 42%, #b93d28 42%, #d0705e); box-shadow: inset 0 0 0 1px #eaa79c; }
.form { display: flex; flex: 1; flex-direction: column; background: #f0f0f0; }
.form-menu { height: 32px; padding-top: 2px; background: #fff; }
.form-menu button { height: 26px; padding: 0 13px 0 12px; background: linear-gradient(#fff, #e2e2e2 70%, #f8f8f8); }
.canvas, .page { background: conic-gradient(at 2px 1px, transparent 270deg, #a0a0a0 0) 0 14px / 15px 15px #f0f0f0; }
.canvas { position: relative; flex: 1; margin-top: 1px; }
.central { position: absolute; inset: 16px 37px 0 15px; border: 1px solid #f77; border-width: 1px 2px 2px 1px; }
.frame-left { position: absolute; left: 208px; top: 20px; bottom: 2px; border-left: 1px dotted #c4c4c4; }
.frame-right { position: absolute; left: 16px; right: 39px; top: 20px; bottom: 2px; border: 1px dotted #c4c4c4; border-width: 0 1px 1px 0; }
.pb { position: absolute; width: 110px; height: 34px; padding-bottom: 2px; border: 1px solid #d0d0d0; border-bottom-color: #bcbcbc; border-radius: 4px; background: #fdfdfd; }
.pb1 { left: 48px; top: 79px; }
.pb2 { left: 33px; top: 154px; }
.pb3 { left: 33px; top: 214px; }
.stacked { position: absolute; inset: 13px 53px 8px 215px; }
.page { position: absolute; inset: 5px 4px 4px 4px; }
.page-prev, .page-next { position: absolute; top: 11px; right: 39px; }
.page-next { right: 15px; }
.h { position: absolute; width: 9px; height: 9px; border: 1px solid #00f; background: #000; }
.nw, .n, .ne { top: 0; }
.sw, .s, .se { bottom: 0; }
.nw, .w, .sw { left: 0; }
.ne, .e, .se { right: 0; }
.n, .s { left: calc(50% - 5px); }
.w, .e { top: calc(50% - 5px); }
.form-status { display: flex; flex: none; align-items: flex-end; justify-content: flex-end; height: 34px; padding: 2px 3px; }

/* right-hand column */
.side { display: grid; grid-template-rows: 441px 468px minmax(0, 1fr); gap: 8px; min-height: 0; padding-top: 1px; }
.tree { display: flex; flex: 1; align-items: stretch; min-height: 0; overflow: hidden; border-left: 1px solid #fafafa; border-bottom: 1px solid #868a92; background: #fff; }
.lined { border-top: 1px solid #868a92; }
table { flex: 1; align-self: flex-start; table-layout: fixed; border-collapse: collapse; }
th, td { padding: 0; overflow: hidden; font-weight: 400; text-align: left; white-space: nowrap; }
thead th { height: 37px; padding-left: 6px; border-right: 1px solid #e0e0e0; }

.inspector .filter { margin: 3px 0 8px 1px; }
.c-name { width: 220px; }
.c-prop { width: 224px; }
.sorted { position: relative; }
.sorted svg { position: absolute; left: 104px; top: 3px; }
.objects tbody tr { height: 27px; }
.objects tbody .tall { height: 30px; }
.objects tbody tr:nth-child(even) { background: #f5f5f5; }
.objects td + td { padding-left: 5px; }
.n { display: flex; align-items: center; }
.chev { width: 14px; height: 10px; margin-right: 14px; }
.ico { width: 25px; height: 26px; margin-right: 8px; }
.l0 { padding-left: 7px; }
.l1 { padding-left: 37px; }
.l2 { padding-left: 67px; }
.l3 { padding-left: 97px; }
.l4 { padding-left: 127px; }
.l4.leaf { padding-left: 155px; }
.l5.leaf { padding-left: 185px; }
.l1.leaf { padding-left: 65px; }
.l4 .chev { margin-right: 9px; }
.l4 span { flex: 1; padding-left: 5px; line-height: 27px; background: #d8d8d8; }
.selected td + td { background: #d8d8d8; }
.t-objects { height: 265px; margin-top: 27px; }
.t-props { height: 272px; margin-top: 26px; }

.prop-tools { display: flex; align-items: center; flex: none; height: 54px; padding: 2px 7px 0 4px; }
.prop-tools .filter { flex: 1; margin-right: 7px; }
.prop-tools button { position: relative; width: 34px; height: 34px; margin-right: 12px; }
.prop-tools button:last-child { margin-right: 0; width: 36px; }
.prop-tools svg { width: 100%; height: 34px; }
.drop::after { content: ""; position: absolute; right: -1px; bottom: 1px; border: 4px solid transparent; border-top-color: #000; border-bottom: 0; }
.target { flex: none; height: 28px; margin: 0 1px 2px 0; padding-left: 4px; border: 1px solid #b8b8b8; border-left: 0; border-bottom-width: 2px; background: #f3f3f3; }
.lined thead th { height: 35px; }
.props tbody tr { height: 30px; border-bottom: 2px solid #d4d4d4; }
.props tbody td { padding-left: 35px; }
.props tbody td + td { padding-left: 5px; border-left: 1px solid #cfcfcf; }
.props tbody th { position: relative; padding-left: 35px; font-weight: 700; }
.props th svg { position: absolute; left: 7px; top: 8px; width: 14px; height: 10px; }
.props th .closed { top: 7px; height: 14px; }
.group { background: #a0a0a0; color: #fff; }
.folded { background: #f0f0f0; }
.peach { background: #fff1de; }
.green { background: #bfffbf; }
.mint { background: #dfffdf; }
.ice { background: #e3ffff; }
.cyan { background: #c4ffff; }

/* resource browser */
.resources { position: relative; }
.res-tools { display: flex; align-items: center; flex: none; height: 51px; padding: 1px 2px 0 7px; }
.res-tools svg { width: 33px; height: 33px; }
.res-tools button { margin-right: 11px; }
.res-tools .filter { width: 248px; margin-left: auto; }
.res-panes { display: grid; grid-template-columns: 292px minmax(0, 1fr); gap: 8px; flex: 1; }
.pane { padding: 1px 0 0 37px; border-right: 1px solid #868a92; border-bottom: 1px solid #868a92; background: #fff; }
.files { border-top: 2px solid #f8f8f8; border-left: 2px solid #f8f8f8; border-right: 0; }
.tabs { display: flex; flex: none; align-items: flex-start; height: 35px; padding: 2px 0 0 3px; }
.tabs button { height: 30px; padding: 0 19px 0 14px; border: 1px solid #e6e6e6; border-top: 0; background: #f3f3f3; }
.tabs .active { height: 33px; padding: 2px 16px 0 18px; background: #f9f9f9; }
.watermark { position: absolute; right: 3px; bottom: -12px; color: rgba(235, 235, 235, .6); font-size: 51px; font-weight: 300; line-height: 56px; text-shadow: 1px 1px 1px rgba(110, 110, 110, .6); white-space: nowrap; }

.statusbar { flex: none; height: 27px; }
```
